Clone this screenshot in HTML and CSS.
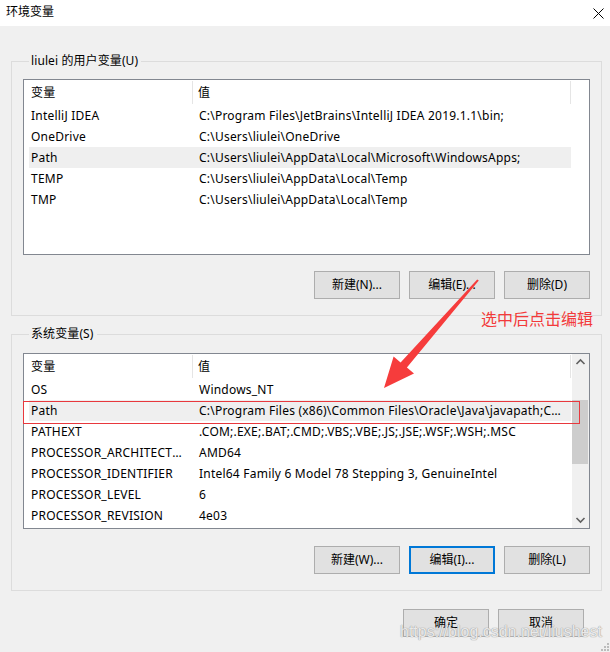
FILE: index.html
```html
<!DOCTYPE html>
<html lang="zh">
<head>
<meta charset="utf-8">
<title>环境变量</title>
<link rel="stylesheet" href="styles.css">
</head>
<body>
<div class="window">
  <div class="titlebar">
    <span class="title">环境变量</span>
    <svg class="close" width="11" height="11" viewBox="0 0 11 11"><path d="M0.5 0.5 L10.5 10.5 M10.5 0.5 L0.5 10.5" stroke="#000" stroke-width="1" fill="none"/></svg>
  </div>
  <div class="content">
    <fieldset class="group user">
      <legend>liulei 的用户变量(U)</legend>
      <div class="list">
        <div class="rows">
          <div class="head"><span class="c1">变量</span><span class="c2">值</span></div>
          <div class="row"><span class="c1">IntelliJ IDEA</span><span class="c2">C:\Program Files\JetBrains\IntelliJ IDEA 2019.1.1\bin;</span></div>
          <div class="row"><span class="c1">OneDrive</span><span class="c2">C:\Users\liulei\OneDrive</span></div>
          <div class="row hl"><span class="c1">Path</span><span class="c2">C:\Users\liulei\AppData\Local\Microsoft\WindowsApps;</span></div>
          <div class="row"><span class="c1">TEMP</span><span class="c2">C:\Users\liulei\AppData\Local\Temp</span></div>
          <div class="row"><span class="c1">TMP</span><span class="c2">C:\Users\liulei\AppData\Local\Temp</span></div>
        </div>
      </div>
      <div class="btns">
        <button class="btn">新建(N)...</button>
        <button class="btn">编辑(E)...</button>
        <button class="btn">删除(D)</button>
      </div>
    </fieldset>
    <fieldset class="group sys">
      <legend>系统变量(S)</legend>
      <div class="list">
        <div class="rows">
          <div class="head"><span class="c1">变量</span><span class="c2">值</span></div>
          <div class="row"><span class="c1">OS</span><span class="c2">Windows_NT</span></div>
          <div class="row hl"><span class="c1">Path</span><span class="c2">C:\Program Files (x86)\Common Files\Oracle\Java\javapath;C:\WINDOWS\system32;C:\WINDOWS</span></div>
          <div class="row"><span class="c1">PATHEXT</span><span class="c2">.COM;.EXE;.BAT;.CMD;.VBS;.VBE;.JS;.JSE;.WSF;.WSH;.MSC</span></div>
          <div class="row"><span class="c1">PROCESSOR_ARCHITECTURE</span><span class="c2">AMD64</span></div>
          <div class="row"><span class="c1">PROCESSOR_IDENTIFIER</span><span class="c2">Intel64 Family 6 Model 78 Stepping 3, GenuineIntel</span></div>
          <div class="row"><span class="c1">PROCESSOR_LEVEL</span><span class="c2">6</span></div>
          <div class="row"><span class="c1">PROCESSOR_REVISION</span><span class="c2">4e03</span></div>
        </div>
        <div class="scrollbar">
          <svg class="arrow" width="17" height="17" viewBox="0 0 17 17"><path d="M4.5 10 L8.5 6 L12.5 10" stroke="#606060" stroke-width="1.6" fill="none"/></svg>
          <div class="track"><div class="thumb"></div></div>
          <svg class="arrow" width="17" height="17" viewBox="0 0 17 17"><path d="M4.5 7 L8.5 11 L12.5 7" stroke="#606060" stroke-width="1.6" fill="none"/></svg>
        </div>
        <div class="redbox"></div>
      </div>
      <div class="btns">
        <button class="btn">新建(W)...</button>
        <button class="btn focus">编辑(I)...</button>
        <button class="btn">删除(L)</button>
      </div>
    </fieldset>
    <div class="footer">
      <button class="btn">确定</button>
      <button class="btn">取消</button>
    </div>
  </div>
  <div class="note">选中后点击编辑</div>
  <svg class="pointer" width="610" height="652" viewBox="0 0 610 652">
    <polygon points="478.8,280.5 406.9,367.6 414.0,373.4 384,388 393.6,356.6 400.6,362.4 477.2,279.5" fill="#f63c3c"/>
  </svg>
  <div class="watermark">https://blog.csdn.net/liushest</div>
  <svg class="grip" width="8" height="8" viewBox="0 0 8 8">
    <rect x="6" y="0" width="2" height="2" fill="#bcbcbc"/>
    <rect x="3" y="3" width="2" height="2" fill="#bcbcbc"/>
    <rect x="6" y="3" width="2" height="2" fill="#bcbcbc"/>
    <rect x="0" y="6" width="2" height="2" fill="#bcbcbc"/>
    <rect x="3" y="6" width="2" height="2" fill="#bcbcbc"/>
    <rect x="6" y="6" width="2" height="2" fill="#bcbcbc"/>
  </svg>
</div>
</body>
</html>
```
FILE: styles.css
```css
* { box-sizing: border-box; }
html, body { margin: 0; padding: 0; }
body {
  width: 610px;
  height: 652px;
  overflow: hidden;
  background: #f0f0f0;
  font-family: "Noto Sans", "Noto Sans CJK SC", sans-serif;
  font-size: 12px;
  color: #000;
}
.window { position: relative; width: 610px; height: 652px; }
.titlebar {
  height: 26px;
  background: #fff;
  display: flex;
  align-items: center;
  justify-content: space-between;
  padding: 0 6px 2px 6px;
}
.title { font-size: 12px; line-height: 16px; }
.close { margin-top: 2px; }
.content { padding-top: 27px; }
.group {
  margin: 0 0 0 11px;
  width: 591px;
  border: 1px solid #dcdcdc;
  padding: 10px 11px 16px 11px;
  min-width: 0;
}
.group legend {
  padding: 0 3px 0 2px;
  margin-left: 6px;
  line-height: 16px;
  font-size: 12px;
  letter-spacing: 0.1px;
}
.group.sys { margin-top: 10px; padding-top: 11px; }
.list {
  position: relative;
  height: 176px;
  border: 1px solid #828790;
  background: #fff;
  display: flex;
}
.rows { width: 542px; margin-left: 5px; letter-spacing: 0.22px; }
.head, .row { display: flex; white-space: nowrap; }
.head { height: 25px; line-height: 24px; padding-top: 1px; }
.row { height: 21px; line-height: 21px; }
.c1 { width: 164px; padding-left: 2px; padding-right: 8px; overflow: hidden; text-overflow: ellipsis; }
.c2 { width: 378px; padding-left: 6px; padding-right: 8px; overflow: hidden; text-overflow: ellipsis; }
.head .c1 { border-right: 1px solid #e5e5e5; height: 23px; }
.head .c2 { border-right: 1px solid #e5e5e5; height: 23px; padding-left: 5px; }
.row.hl { background: #efefef; }
.scrollbar {
  width: 17px;
  margin-left: auto;
  background: #f0f0f0;
  display: flex;
  flex-direction: column;
}
.arrow { display: block; flex: none; }
.track { flex: 1; padding-top: 29px; }
.thumb { height: 64px; background: #cdcdcd; margin-right: 1px; }
.redbox {
  position: absolute;
  left: -1px;
  top: 47px;
  width: 557px;
  height: 23px;
  border: 1px solid #e8383d;
}
.btns {
  display: flex;
  justify-content: flex-end;
  gap: 9px;
  margin-top: 16px;
}
.sys .btns { margin-top: 17px; }
.btn {
  width: 86px;
  height: 28px;
  background: #e1e1e1;
  border: 1px solid #adadad;
  font-family: "Noto Sans", "Noto Sans CJK SC", sans-serif;
  font-size: 12px;
  color: #000;
  padding: 0;
  margin: 0;
  line-height: 26px;
}
.btn.focus { border: 2px solid #0078d7; line-height: 24px; }
.footer {
  display: flex;
  justify-content: flex-end;
  gap: 9px;
  padding: 18px 26px 0 0;
}
.note {
  position: absolute;
  left: 481px;
  top: 308px;
  font-size: 16px;
  line-height: 20px;
  color: #f33a3a;
  font-family: "Noto Sans CJK SC", sans-serif;
}
.pointer { position: absolute; left: 0; top: 0; pointer-events: none; }
.watermark {
  position: absolute;
  left: 400px;
  top: 622px;
  font-family: "Liberation Sans", sans-serif;
  font-size: 16px;
  line-height: 20px;
  color: rgba(255, 255, 255, 0.8);
  text-shadow: 0 0 1px #9a9a9a, 0 0 1px #9a9a9a;
  white-space: nowrap;
}
.grip { position: absolute; right: 1px; bottom: 1px; }
```
